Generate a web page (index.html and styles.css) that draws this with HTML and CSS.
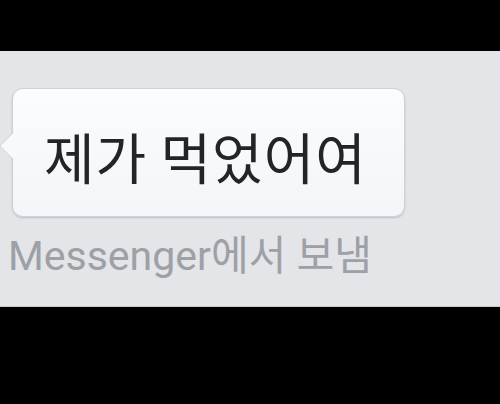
FILE: index.html
```html
<!DOCTYPE html>
<html>
  <head>
    <meta name="viewport" content="width=device-width, initial-scale=1">
    <link rel="stylesheet" href="styles.css">
  </head>
  <body>
    <div class="top-bar"></div>

    <div class="chat">
      <div class="bubble">
        <span class="bubble-text">제가 먹었어여</span>
      </div>
      <p class="sent-from">Messenger에서 보냄</p>
    </div>
  </body>
</html>
```

FILE: styles.css
```css
body {
  margin: 0;
  background-color: #000;
  font-family: Roboto, "Noto Sans CJK KR", sans-serif;
}

.top-bar {
  height: 51px;
}

/* grey chat strip */
.chat {
  height: 256px;
  background-color: #e3e5e9;
  padding-top: 37px;
  box-sizing: border-box;
  border-bottom: 1px solid #c9cbcf;
}

/* the message bubble */
.bubble {
  position: relative;
  margin-left: 12px;
  width: 393px;
  height: 129px;
  box-sizing: border-box;
  border: 1px solid #cfd1d6;
  border-radius: 11px;
  background: linear-gradient(#fbfcfd, #f3f5f8);
  box-shadow: 0 1px 2px rgba(0, 0, 0, 0.18);
  display: flex;
  align-items: center;
  padding-left: 31px;
}

/* little tail pointing left */
.bubble::before {
  content: "";
  position: absolute;
  left: -10px;
  top: 47px;
  width: 19px;
  height: 19px;
  border-radius: 2px;
  background-color: #f8f9fb;
  border-left: 1px solid #cfd1d6;
  border-bottom: 1px solid #cfd1d6;
  transform: rotate(45deg);
}

.bubble-text {
  font-family: "Noto Sans CJK KR", sans-serif;
  font-size: 55px;
  color: #232426;
  letter-spacing: 1px;
  margin-top: 4px;
}

.sent-from {
  margin: 19px 0 0 8px;
  font-size: 41px;
  color: #9da0a5;
  line-height: 1;
}
```
